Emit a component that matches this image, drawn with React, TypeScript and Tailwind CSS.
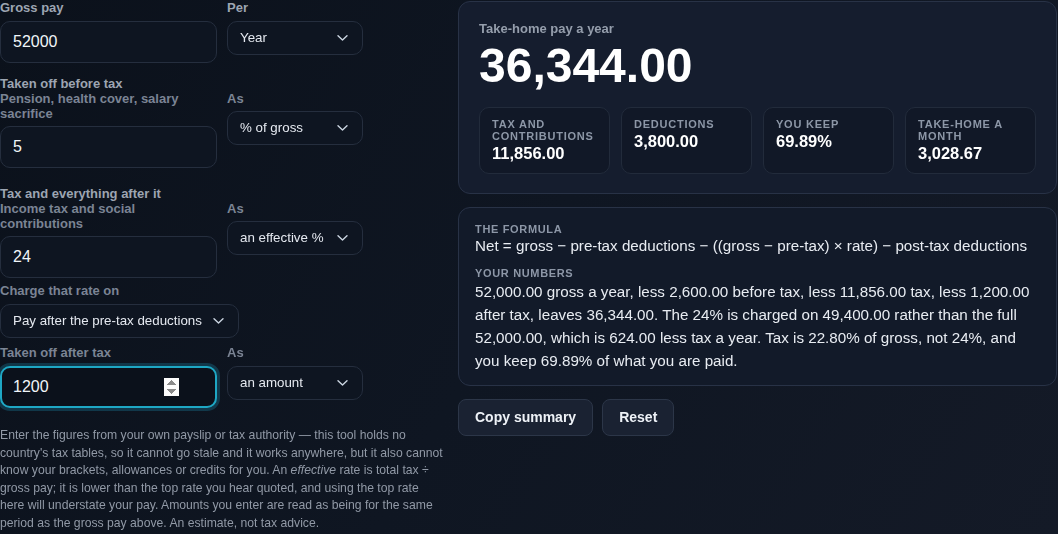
import { ReactNode } from "react"

const FONT = "font-['Liberation_Sans',Arial,sans-serif]"

function Chevron() {
  return (
    <svg
      width="11"
      height="7"
      viewBox="0 0 11 7"
      fill="none"
      className="pointer-events-none absolute right-[15px] top-1/2 -translate-y-1/2"
    >
      <path d="M1 1.2l4.5 4.3L10 1.2" stroke="#cbd5e1" strokeWidth="1.4" strokeLinecap="round" strokeLinejoin="round" />
    </svg>
  )
}

function Select({ value, className = "" }: { value: string; className?: string }) {
  return (
    <div className={`relative ${className}`}>
      <select
        defaultValue={value}
        className="h-[34px] w-full appearance-none rounded-[10px] border border-[#252e3e] bg-[#0e1521] pl-3 pr-8 text-[13.333px] text-[#e5e9f0] outline-none"
      >
        <option>{value}</option>
      </select>
      <Chevron />
    </div>
  )
}

function NumInput({ value, focused = false }: { value: string; focused?: boolean }) {
  return (
    <input
      type="number"
      defaultValue={value}
      autoFocus={focused}
      className={
        focused
          ? "h-[42px] w-full rounded-[10px] border-2 border-[#1ea7c4] bg-[#0b111b] pl-[11px] pr-[36px] text-[16px] text-[#f1f5f9] shadow-[0_0_0_3px_rgba(30,150,185,0.28)] outline-none"
          : "h-[42px] w-full rounded-[10px] border border-[#252e3e] bg-[#0e1521] pl-3 pr-[37px] text-[16px] text-[#f1f5f9] outline-none"
      }
    />
  )
}

function Label({ children, dim = false }: { children: ReactNode; dim?: boolean }) {
  return (
    <div className={`text-[13px] font-bold leading-[15px] ${dim ? "text-[#7b8494]" : "text-[#9da5b2]"}`}>
      {children}
    </div>
  )
}

function Stat({ label, value }: { label: string; value: string }) {
  return (
    <div className="rounded-[10px] border border-[#222b3b] bg-[#111827] px-3 pb-[10px] pt-[10px]">
      <div className="text-[11px] font-bold uppercase leading-[12px] tracking-[0.07em] text-[#8d97a7]">{label}</div>
      <div className="mt-px text-[16.5px] font-bold leading-[20px] text-white">{value}</div>
    </div>
  )
}

export default function App() {
  return (
    <div
      className={`${FONT} min-h-screen w-full bg-[linear-gradient(120deg,#0b111b_0%,#0f1622_50%,#141a27_100%)] text-[#e5e9f0]`}
    >
      <div className="flex items-start gap-[15px]">
        {/* inputs */}
        <div className="w-[443px] shrink-0">
          <div className="grid grid-cols-[217px_136px] gap-x-[10px]">
            <div>
              <div className="mb-[6px]">
                <Label>Gross pay</Label>
              </div>
              <NumInput value="52000" />
            </div>
            <div>
              <div className="mb-[6px]">
                <Label>Per</Label>
              </div>
              <Select value="Year" />
            </div>
          </div>

          <div className="mt-[13px]">
            <Label>Taken off before tax</Label>
            <div className="grid grid-cols-[217px_136px] gap-x-[10px]">
              <div>
                <div className="mb-[5px]">
                  <Label dim>Pension, health cover, salary sacrifice</Label>
                </div>
                <NumInput value="5" />
              </div>
              <div>
                <div className="mb-[5px]">
                  <Label dim>As</Label>
                </div>
                <Select value="% of gross" />
              </div>
            </div>
          </div>

          <div className="mt-[18px]">
            <Label>Tax and everything after it</Label>
            <div className="grid grid-cols-[217px_136px] gap-x-[10px]">
              <div>
                <div className="mb-[5px]">
                  <Label dim>Income tax and social contributions</Label>
                </div>
                <NumInput value="24" />
              </div>
              <div>
                <div className="mb-[5px]">
                  <Label dim>As</Label>
                </div>
                <Select value="an effective %" />
              </div>
            </div>
          </div>

          <div className="mt-[5px]">
            <div className="mb-[6px]">
              <Label dim>Charge that rate on</Label>
            </div>
            <Select value="Pay after the pre-tax deductions" className="w-[239px]" />
          </div>

          <div className="mt-[7px] grid grid-cols-[217px_136px] gap-x-[10px]">
            <div>
              <div className="mb-[6px]">
                <Label dim>Taken off after tax</Label>
              </div>
              <NumInput value="1200" focused />
            </div>
            <div>
              <div className="mb-[6px]">
                <Label dim>As</Label>
              </div>
              <Select value="an amount" />
            </div>
          </div>

          <p className="mt-[19px] text-[12.2px] leading-[17.5px] text-[#9199a6]">
            Enter the figures from your own payslip or tax authority — this tool holds no country's tax tables, so it
            cannot go stale and it works anywhere, but it also cannot know your brackets, allowances or credits for you.
            An <em>effective</em> rate is total tax ÷ gross pay; it is lower than the top rate you hear quoted, and using
            the top rate here will understate your pay. Amounts you enter are read as being for the same period as the
            gross pay above. An estimate, not tax advice.
          </p>
        </div>

        {/* results */}
        <div className="w-[599px] shrink-0 pt-px">
          <div className="rounded-[12px] border border-[#283246] bg-[#151d2e] px-5 pb-[19px] pt-[19px]">
            <div className="text-[13px] font-bold leading-[15px] text-[#959eac]">Take-home pay a year</div>
            <div className="mt-[6px] text-[48px] font-bold leading-[48px] text-white">36,344.00</div>
            <div className="mt-[17px] grid grid-cols-4 gap-[11px]">
              <Stat label="Tax and contributions" value="11,856.00" />
              <Stat label="Deductions" value="3,800.00" />
              <Stat label="You keep" value="69.89%" />
              <Stat label="Take-home a month" value="3,028.67" />
            </div>
          </div>

          <div className="mt-[13px] rounded-[12px] border border-[#283246] bg-[#121a29] px-4 pb-[13px] pt-[14px]">
            <div className="text-[11px] font-bold uppercase leading-[14px] tracking-[0.06em] text-[#8d97a7]">
              The formula
            </div>
            <div className="text-[15.2px] leading-[20px] text-[#e8ecf2]">
              Net = gross − pre-tax deductions − ((gross − pre-tax) × rate) − post-tax deductions
            </div>
            <div className="mt-[10px] text-[11px] font-bold uppercase leading-[14px] tracking-[0.06em] text-[#8d97a7]">
              Your numbers
            </div>
            <p className="text-[15.2px] leading-[23px] text-[#e8ecf2]">
              52,000.00 gross a year, less 2,600.00 before tax, less 11,856.00 tax, less 1,200.00 after tax, leaves
              36,344.00. The 24% is charged on 49,400.00 rather than the full 52,000.00, which is 624.00 less tax a year.
              Tax is 22.80% of gross, not 24%, and you keep 69.89% of what you are paid.
            </p>
          </div>

          <div className="mt-[13px] flex gap-[9px]">
            <button className="h-[37px] rounded-[8px] border border-[#2c3648] bg-[#1a2232] px-4 text-[14px] font-bold text-[#eef2f7]">
              Copy summary
            </button>
            <button className="h-[37px] rounded-[8px] border border-[#2c3648] bg-[#1a2232] px-4 text-[14px] font-bold text-[#eef2f7]">
              Reset
            </button>
          </div>
        </div>
      </div>
    </div>
  )
}
